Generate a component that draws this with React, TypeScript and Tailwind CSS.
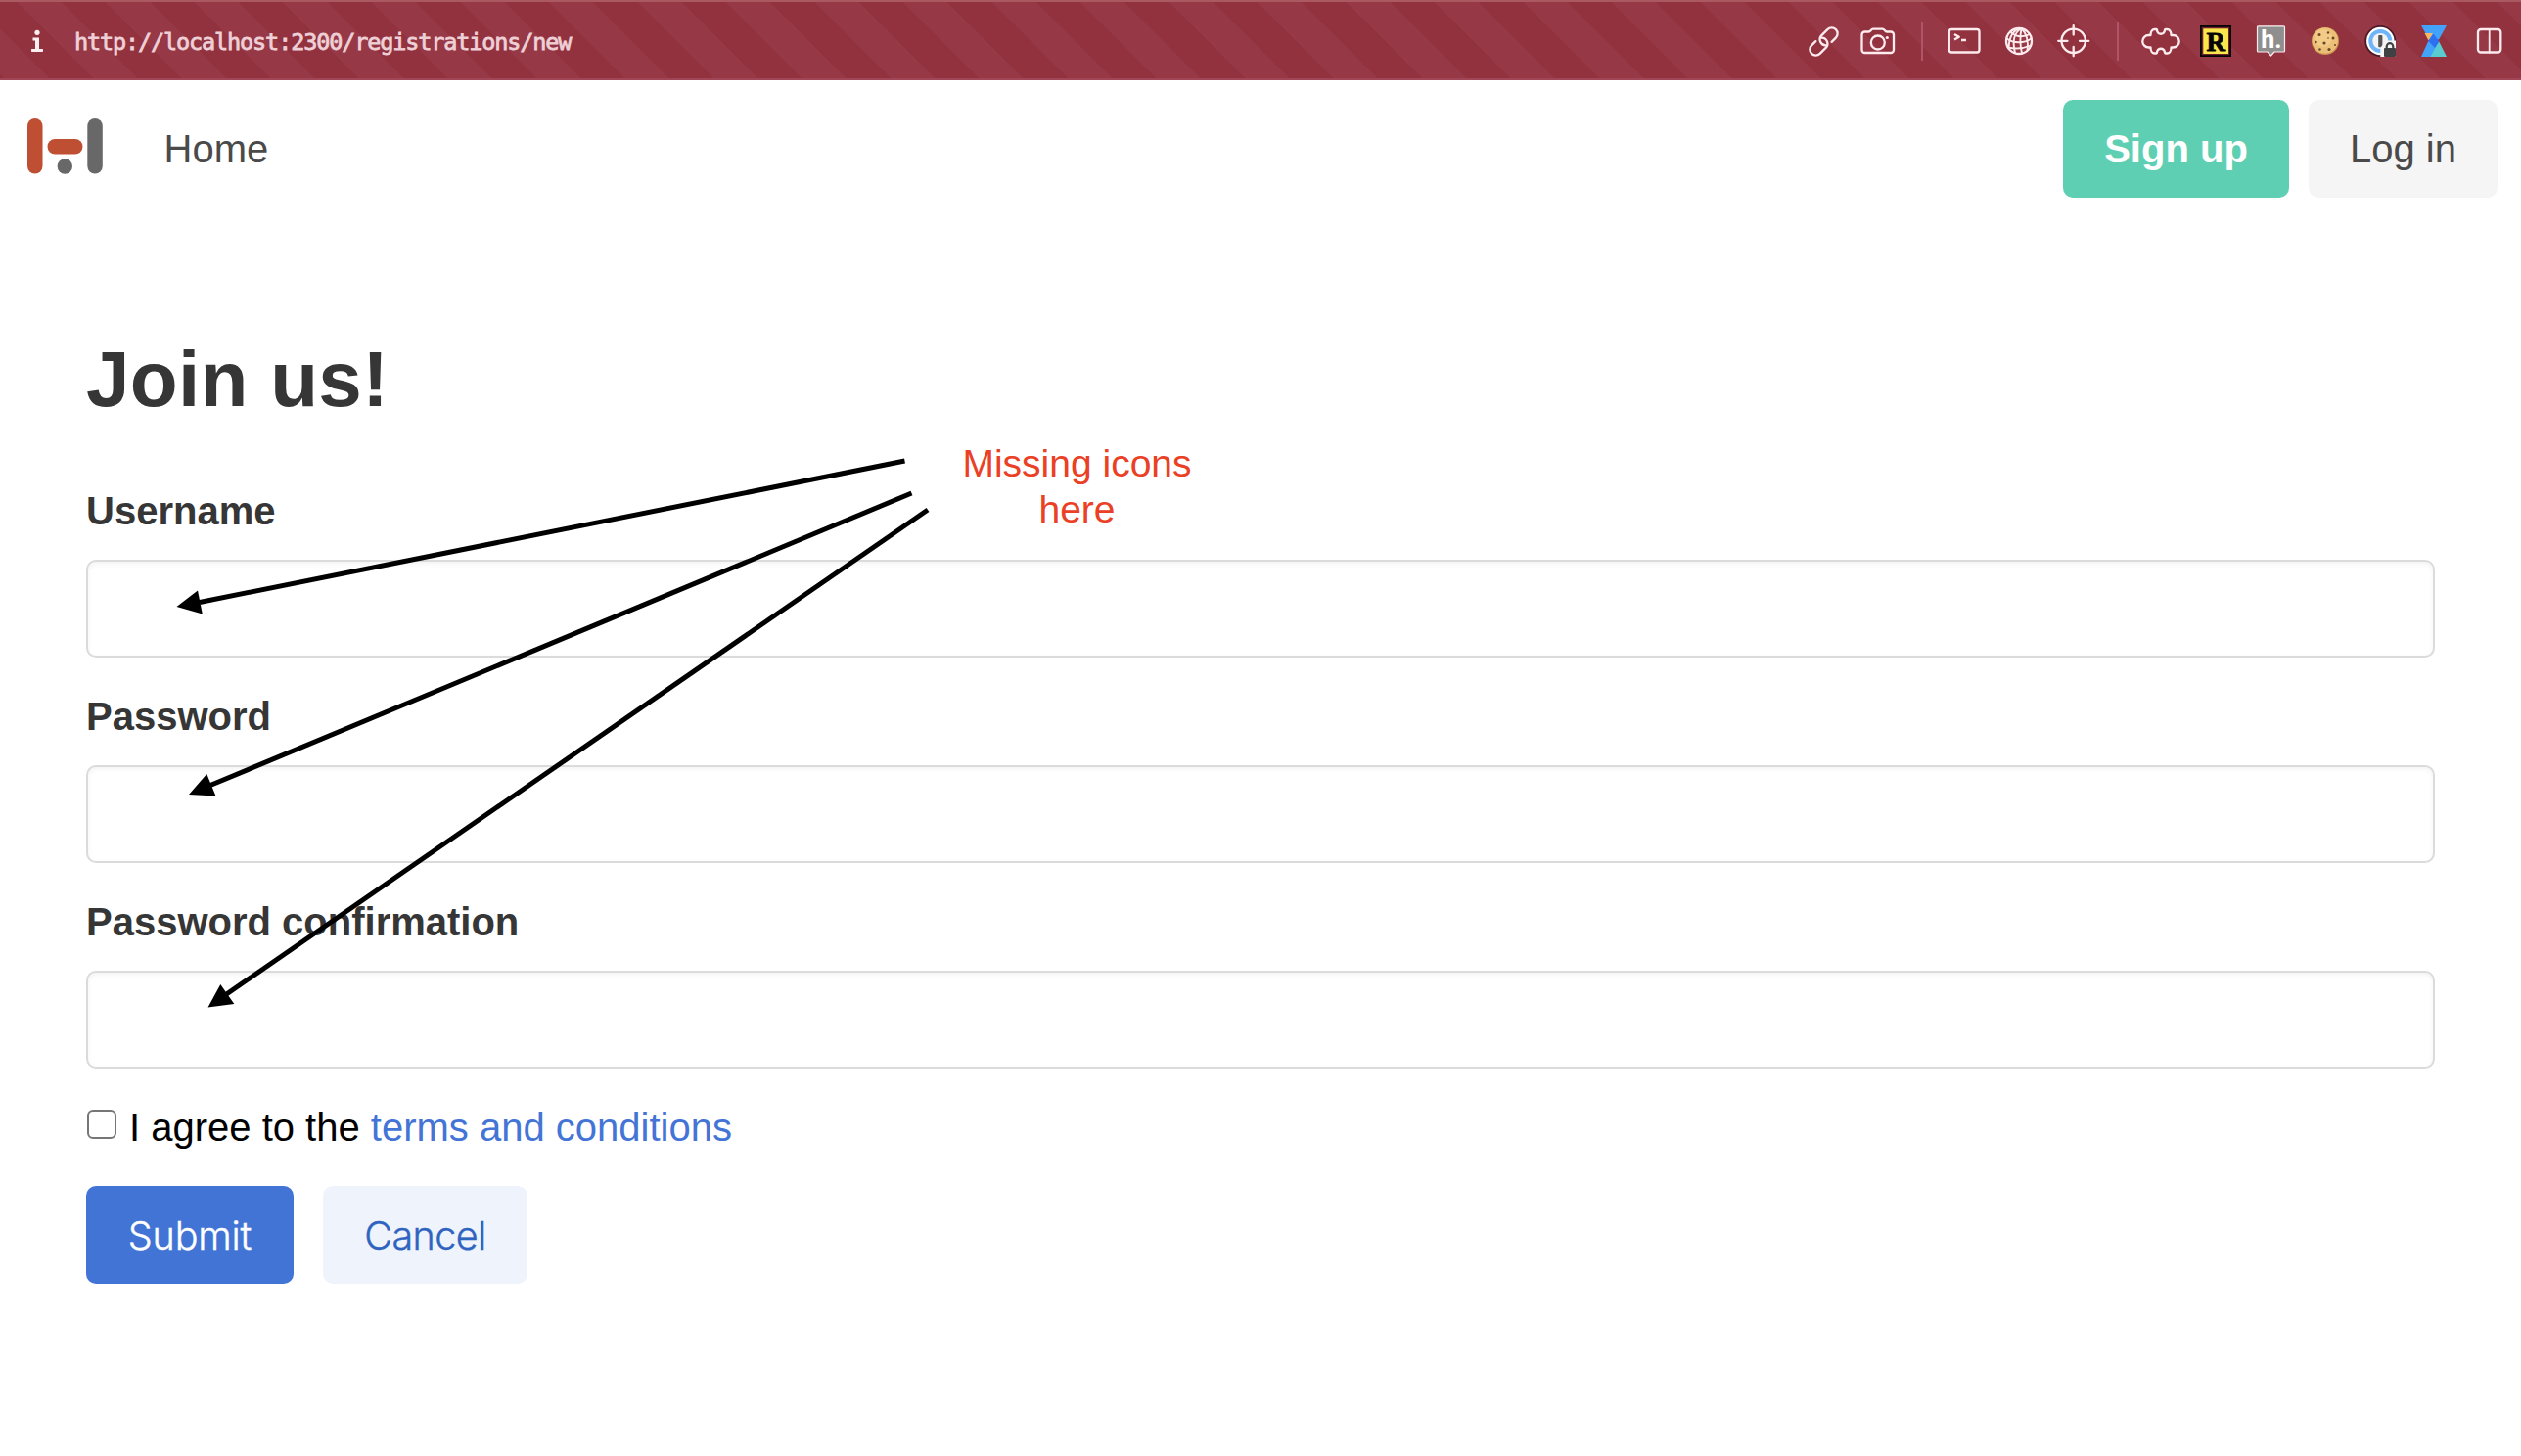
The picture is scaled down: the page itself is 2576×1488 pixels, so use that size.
import type { ReactNode } from "react";

const FIELDS = ["Username", "Password", "Password confirmation"];

function Field({ label }: { label: string }) {
  return (
    <div className="mb-[30px] flex flex-col">
      <label className="mb-5 text-[40px] leading-[60px] font-bold text-[#363636]">{label}</label>
      <input className="h-[100px] w-full rounded-[10px] border-2 border-[#dbdbdb] bg-white px-8 text-[40px] shadow-[inset_0_2px_5px_rgba(10,10,10,0.05)] outline-none" />
    </div>
  );
}

function Icon({ children }: { children: ReactNode }) {
  return (
    <svg
      width="40"
      height="40"
      viewBox="0 0 40 40"
      fill="none"
      stroke="#fdebee"
      strokeWidth="2.3"
      strokeLinecap="round"
      strokeLinejoin="round"
      className="shrink-0"
    >
      {children}
    </svg>
  );
}

const chainLoop = "M5.5 6H11.5a6 6 0 0 0 0-12H3a6 6 0 0 0-4 10.47";

function PageTools() {
  return (
    <div className="flex gap-4">
      <Icon>
        <g transform="translate(20.5 20.5) rotate(-45)">
          <path d={chainLoop} />
          <path d={chainLoop} transform="rotate(180)" />
        </g>
      </Icon>
      <Icon>
        <path d="M6.5 10.5h4c1 0 1.4-.4 2-1.2.8-1 1.5-1.6 2.5-1.6h9.5c1 0 1.7.6 2.5 1.6.6.8 1 1.2 2 1.2H33a3 3 0 0 1 3 3v15.5a3 3 0 0 1-3 3H6.500a3 3 0 0 1-3-3V13.500a3 3 0 0 1 3-3z" />
        <circle cx="19.800" cy="21.500" r="7" />
        <circle cx="29.300" cy="16.500" r="1.600" fill="#fdebee" stroke="none" />
      </Icon>
    </div>
  );
}

function DevTools() {
  return (
    <div className="flex gap-4">
      <Icon>
        <rect x="4.800" y="8" width="30.700" height="23.500" rx="2.500" />
        <path d="M10 13l4.800 2.700L10 18.500M17 19h5" strokeLinecap="butt" />
      </Icon>
      <Icon>
        <circle cx="20" cy="20" r="13" />
        <g strokeWidth="1.900">
          <path d="M22.500 7c-7 4-9.500 13-6.500 25" />
          <path d="M22.500 7c-1.500 8-1.500 17 .5 25.500" />
          <path d="M22.500 7c5 5 7.500 12 6 22.500" />
          <path d="M22.500 7C15 8 10 13 9.500 27.500" />
          <path d="M11 10.500c5.500 5 13 6 20 2.500" />
          <path d="M7.500 17.500c7 5 17.500 5 25 0" />
          <path d="M8.500 26.500c7 1.500 15.500 1.500 23.500-2" />
        </g>
      </Icon>
      <Icon>
        <circle cx="19.700" cy="19.800" r="12.200" />
        <path d="M19.700 4.200v9.300M19.700 26v9.300M4.200 19.800h9.300M26 19.800h9.300" />
      </Icon>
    </div>
  );
}

function Extensions() {
  return (
    <div className="flex gap-4">
      <Icon>
        <path d="M9.500 14c0-4 2-6 4-6H15c1 0 1.200 1 1.200 2a4 4 0 0 0 7.600 0c0-1 .2-2 1.200-2h1.500c2 0 4 2 4 6h2a6 6 0 0 1 0 12.500h-2c0 4-2 6-4 6H25c-1 0-1.200-1-1.200-2a4 4 0 0 0-7.600 0c0 1-.2 2-1.200 2h-1.500c-2 0-4-2-4-6h-2a6 6 0 0 1 0-12.500z" />
      </Icon>
      <Icon>
        <rect x="4.900" y="4.900" width="30.200" height="30.200" fill="#6d2230" stroke="#050505" strokeWidth="1.800" strokeLinejoin="miter" />
        <rect x="7.300" y="7.300" width="25.700" height="25.700" fill="#fbe64b" stroke="none" />
        <text x="20.200" y="29.500" textAnchor="middle" fontFamily="Liberation Serif, serif" fontWeight="700" fontSize="27" fill="#050505" stroke="#050505" strokeWidth="0.800">R</text>
      </Icon>
      <Icon>
        <path d="M7.500 4.800h26a1 1 0 0 1 1 1V30a1 1 0 0 1-1 1h-9.500l-3.500 4-3.500-4H7.500a1 1 0 0 1-1-1V5.800a1 1 0 0 1 1-1z" fill="#8f8f8f" strokeWidth="1.200" />
        <text x="21" y="26.500" textAnchor="middle" fontFamily="Roboto, sans-serif" fontWeight="700" fontSize="25" fill="#fff" stroke="none">h.</text>
      </Icon>
      <Icon>
        <g stroke="none">
          <circle cx="20" cy="20" r="14" fill="#cc9450" />
          <circle cx="19.800" cy="19.400" r="13.200" fill="#ebbf77" />
          <circle cx="18" cy="17" r="9" fill="#f2cb88" />
          <g fill="#6b4725">
            <circle cx="14" cy="13.500" r="1.500" />
            <circle cx="23" cy="11.500" r="1.200" />
            <circle cx="28" cy="17" r="1.500" />
            <circle cx="19" cy="22" r="1.600" />
            <circle cx="10.500" cy="21" r="1.200" />
            <circle cx="14.500" cy="28.500" r="1.300" />
            <circle cx="24" cy="28.500" r="1.600" />
            <circle cx="30" cy="24" r="1" />
            <circle cx="23" cy="17" r=".8" />
          </g>
        </g>
      </Icon>
      <Icon>
        <g stroke="none">
          <circle cx="20.300" cy="20" r="16" fill="#4c1825" />
          <circle cx="20.300" cy="20" r="14.200" fill="#fff" />
          <circle cx="20.300" cy="20" r="12" fill="#6db4f8" />
          <circle cx="20.300" cy="20" r="8" fill="#f3f3f3" />
          <rect x="18.200" y="14" width="4.200" height="12.300" rx="1" fill="#555" />
          <path d="M20.300 36V27l5.500-7.500H36V36z" fill="#f7f5f6" />
          <rect x="24" y="27" width="12" height="9" rx="1" fill="#3f4143" />
        </g>
        <path d="M26.700 27v-1.500a3.300 3.300 0 0 1 6.600 0V27" stroke="#3f4143" strokeWidth="2.200" />
      </Icon>
      <Icon>
        <g stroke="none">
          <path d="M6 4h26l-8 14.500h-10z" fill="#43a3fb" />
          <path d="M9.500 12h8.500l-4.500 7.500z" fill="#f8b766" />
          <path d="M13.300 20L6 36h10l7.500-13z" fill="#43a3fb" />
          <path d="M24 20l8 16H15.500z" fill="#5accd0" />
          <path d="M18.500 12.500L24.300 20.500 20 27l-6.700-7z" fill="#2e70f2" />
        </g>
      </Icon>
      <Icon>
        <rect x="8" y="8" width="23.300" height="23.500" rx="3" />
        <path d="M19.700 8v23.500" strokeWidth="1.800" />
      </Icon>
    </div>
  );
}

function Separator({ className }: { className: string }) {
  return <div className={`h-10 w-0.5 bg-[#b25468] ${className}`} />;
}

function AddressBar() {
  return (
    <div className="flex h-[82px] items-start justify-between border-t-2 border-b-2 border-t-[#a9595f] border-b-[#a04656] bg-[repeating-linear-gradient(45deg,#92323f_0px,#92323f_3.5px,#963846_3.5px,#963846_35.5px,#92323f_35.5px,#92323f_64px)] pt-5 pr-3">
      <div className="flex">
        <svg width="20" height="30" viewBox="0 0 20 30" className="mt-1.5 ml-7" fill="#fdeef0">
          <circle cx="10" cy="5.300" r="2.600" />
          <path d="M5.500 10.500H12V22h3.300a.7.7 0 0 1 .7.7v1.600a.7.7 0 0 1-.7.7H4.700a.7.7 0 0 1-.7-.7v-1.600a.7.7 0 0 1 .7-.7H8v-8.500H5.500z" />
        </svg>
        <span className="ml-7 pt-px font-['DejaVu_Sans_Mono',monospace] text-[23.5px] leading-[40px] tracking-[-1.14px] text-[#eed0d6] [-webkit-text-stroke:0.8px_#eed0d6]">
          http://localhost:2300/registrations/new
        </span>
      </div>
      <div className="flex">
        <PageTools />
        <Separator className="mr-[22px] ml-[24px]" />
        <DevTools />
        <Separator className="mr-[23px] ml-6" />
        <Extensions />
      </div>
    </div>
  );
}

function Logo() {
  return (
    <svg width="80" height="60" viewBox="0 0 80 60" className="mb-[5px] ml-[26px]">
      <g fill="#bf4f32">
        <rect x="2" y="1" width="15.500" height="56.500" rx="7.700" />
        <rect x="22.500" y="22" width="36" height="15.500" rx="7.700" />
      </g>
      <g fill="#686868">
        <circle cx="40.300" cy="50" r="7.700" />
        <rect x="63.300" y="1" width="15.500" height="56.500" rx="7.700" />
      </g>
    </svg>
  );
}

function Navbar() {
  return (
    <nav className="flex h-[140px] items-center justify-between pr-6 text-[40px] leading-[60px] text-[#4a4a4a]">
      <div className="flex items-center">
        <Logo />
        <a className="ml-[61.5px]">Home</a>
      </div>
      <div className="flex gap-5">
        <a className="flex h-[100px] w-[231px] items-center justify-center rounded-[10px] bg-[#5fcfb4] font-bold text-white">Sign up</a>
        <a className="flex h-[100px] w-[193px] items-center justify-center rounded-[10px] bg-[#f5f5f5]">Log in</a>
      </div>
    </nav>
  );
}

function Annotations() {
  return (
    <div className="pointer-events-none absolute inset-0">
      <svg width="2576" height="1488" viewBox="0 0 2576 1488" stroke="#000" strokeWidth="5">
        <path d="M924.500 471L204 615.500" />
        <path d="M931.500 504L215 802.500" />
        <path d="M948 521L230 1017" />
        <g stroke="none">
          <path d="M180.500 620L202 603.500 206.800 627.500z" />
          <path d="M193 812L211.300 791 220.500 813.500z" />
          <path d="M212.500 1029.500L225.300 1006 239.300 1026z" />
        </g>
      </svg>
      <p className="absolute top-[450px] left-[970px] w-[261px] text-center text-[39px] leading-[47px] text-[#ea4025]">
        Missing icons
        <br />
        here
      </p>
    </div>
  );
}

export default function App() {
  return (
    <div className="relative h-[1488px] w-[2576px] overflow-hidden bg-white font-['Liberation_Sans',Arial,sans-serif]">
      <AddressBar />
      <Navbar />
      <main className="mx-auto w-[2400px] pt-[121px]">
        <h1 className="mb-[59px] text-[80px] leading-[90px] font-bold tracking-[0.3px] text-[#363636]">Join us!</h1>
        <form>
          {FIELDS.map((label) => (
            <Field key={label} label={label} />
          ))}
          <label className="mb-[30px] flex text-[40px] leading-[60px] text-black">
            <input
              type="checkbox"
              className="mt-3 mr-[13px] ml-px size-[30px] appearance-none rounded-[6px] border-2 border-[#767676] bg-white"
            />
            <span>
              I agree to the <a className="text-[#4374d6]">terms and conditions</a>
            </span>
          </label>
          <div className="flex gap-[30px] font-['Inter',sans-serif] text-[39.5px] leading-[60px] font-light">
            <button type="button" className="h-[100px] w-[212px] rounded-[10px] bg-[#4274d6] pt-0.5 tracking-[-0.2px] text-white [-webkit-text-stroke:0.4px_#fff]">Submit</button>
            <button type="button" className="h-[100px] w-[209px] rounded-[10px] bg-[#eef3fc] pt-0.5 tracking-[-0.6px] text-[#2f63c0] [-webkit-text-stroke:0.4px_#2f63c0]">Cancel</button>
          </div>
        </form>
      </main>
      <Annotations />
    </div>
  );
}
